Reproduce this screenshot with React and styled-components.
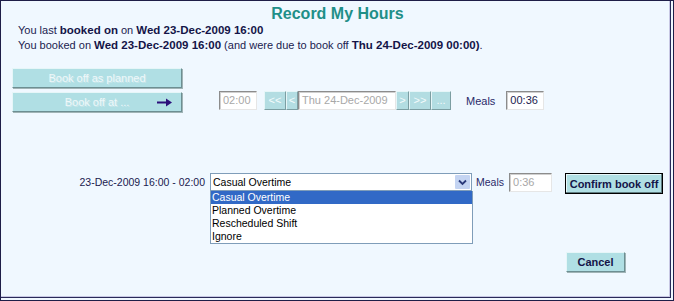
import styled, { createGlobalStyle } from "styled-components";

const GlobalStyle = createGlobalStyle`
  html, body {
    margin: 0;
    padding: 0;
    background: #ffffff;
  }
  body {
    font-family: "Liberation Sans", Arial, sans-serif;
  }
`;

const Frame = styled.div`
  box-sizing: border-box;
  width: 674px;
  height: 301px;
  background: #f0f8ff;
  border: 1px solid #1e1e48;
  box-shadow: inset -2px -2px 0 #f0f8ff, inset -3px -3px 0 #2a2a5a,
    inset -4px -4px 0 #c8c8e4;
  padding: 3px 0 0 11px;
  color: #1b1b4f;
  font-size: 11px;
`;

const Title = styled.h1`
  margin: 0;
  padding-right: 10px;
  text-align: center;
  font-size: 16px;
  font-weight: bold;
  color: #1f8f88;
  line-height: 19px;
`;

const InfoLine = styled.div`
  padding-left: 6px;
  line-height: 15px;
  font-size: 11px;
  white-space: nowrap;

  b {
    font-size: 11.5px;
    color: #141448;
  }
`;

const TopRow = styled.div`
  display: flex;
  align-items: flex-end;
  margin-top: 15px;
`;

const ButtonStack = styled.div`
  display: flex;
  flex-direction: column;
  gap: 4px;
  width: 170px;
  flex: none;
`;

const WideButton = styled.button`
  position: relative;
  box-sizing: border-box;
  height: 20px;
  width: 100%;
  padding: 0;
  background: #b0dfe4;
  border: 1px solid;
  border-color: #e6f6f8 #6d8e92 #6d8e92 #e6f6f8;
  box-shadow: 1px 1px 0 #a0b4b6;
  color: #eef8fa;
  font-family: "Liberation Sans", Arial, sans-serif;
  font-size: 11px;
  text-shadow: 1px 1px 0 #c8e6ea;
  text-align: center;
`;

const ArrowIcon = styled.svg`
  position: absolute;
  right: 9px;
  top: 5px;
`;

const DateControls = styled.div`
  display: flex;
  align-items: center;
  margin-left: 37px;
  margin-bottom: 2px;
`;

const TextBox = styled.div`
  box-sizing: border-box;
  flex: none;
  width: ${(p) => p.$w}px;
  height: 19px;
  background: #ffffff;
  border: 1px solid;
  border-color: #8c8c8c #e6e6e6 #e6e6e6 #8c8c8c;
  box-shadow: inset 1px 1px 0 #d0d0d0;
  color: ${(p) => (p.$active ? "#1b1b4f" : "#a8a8a8")};
  font-size: 11px;
  line-height: 17px;
  padding-left: 3px;
  white-space: nowrap;
`;

const NavButton = styled.div`
  box-sizing: border-box;
  flex: none;
  width: ${(p) => p.$w}px;
  height: 19px;
  background: #b3dde2;
  border: 1px solid;
  border-color: #e6f6f8 #7c9ea2 #7c9ea2 #e6f6f8;
  color: #f4fbfc;
  font-size: 11px;
  line-height: 16px;
  text-align: center;
`;

const Gap = styled.div`
  width: ${(p) => p.$w}px;
  flex: none;
`;

const Label = styled.span`
  color: #2a2a6a;
  font-size: ${(p) => p.$size || 11}px;
  white-space: nowrap;
`;

const ShiftRow = styled.div`
  display: flex;
  align-items: flex-start;
  margin-top: 61px;

  & > * {
    flex: none;
  }
`;

const ShiftLabel = styled.div`
  width: 193px;
  text-align: right;
  line-height: 18px;
  font-size: 10.5px;
  color: #1b1b4f;
  white-space: nowrap;
`;

const SelectWrap = styled.div`
  position: relative;
  margin-left: 5px;
`;

const SelectBox = styled.div`
  box-sizing: border-box;
  display: flex;
  width: 262px;
  height: 18px;
  background: #ffffff;
  border: 1px solid #7f9db9;
  font-size: 10.5px;
  line-height: 16px;
  color: #000000;
`;

const SelectText = styled.div`
  flex: 1;
  padding-left: 2px;
`;

const SelectArrow = styled.div`
  width: 15px;
  margin: 1px;
  display: flex;
  align-items: center;
  justify-content: center;
  background: #c4d4f2;
  border-radius: 1px;
`;

const DropList = styled.ul`
  position: absolute;
  left: 0;
  top: 18px;
  box-sizing: border-box;
  width: 263px;
  margin: 0;
  padding: 0;
  list-style: none;
  background: #ffffff;
  border: 1px solid #7f9db9;
  border-top: none;
  z-index: 2;
`;

const DropItem = styled.li`
  height: 13px;
  line-height: 13px;
  padding-left: 1px;
  font-size: 10.5px;
  color: ${(p) => (p.$selected ? "#ffffff" : "#000000")};
  background: ${(p) => (p.$selected ? "#3169c6" : "transparent")};
  white-space: nowrap;
`;

const MealsGroup = styled.div`
  display: flex;
  align-items: center;
  height: 18px;
  margin-left: 4px;
  gap: 5px;
`;

const ConfirmButton = styled.button`
  box-sizing: border-box;
  height: 21px;
  width: 98px;
  margin-left: 13px;
  padding: 0;
  background: #b0dfe4;
  border: 1px solid #000000;
  box-shadow: inset -1px -1px 0 #5f7c80, inset 1px 1px 0 #e8f7f9;
  color: #141448;
  font-family: "Liberation Sans", Arial, sans-serif;
  font-size: 11px;
  font-weight: bold;
`;

const CancelRow = styled.div`
  display: flex;
  justify-content: flex-end;
  margin-top: 58px;
  padding-right: 48px;
`;

const CancelButton = styled.button`
  box-sizing: border-box;
  height: 20px;
  width: 59px;
  padding: 0;
  background: #b0dfe4;
  border: 1px solid;
  border-color: #e6f6f8 #6d8e92 #6d8e92 #e6f6f8;
  box-shadow: 1px 1px 0 #a0b4b6;
  color: #141448;
  font-family: "Liberation Sans", Arial, sans-serif;
  font-size: 11px;
  font-weight: bold;
`;

const options = [
  "Casual Overtime",
  "Planned Overtime",
  "Rescheduled Shift",
  "Ignore",
];

export default function App() {
  return (
    <>
      <GlobalStyle />
      <Frame>
        <Title>Record My Hours</Title>
        <InfoLine>
          You last <b>booked on</b> on <b>Wed 23-Dec-2009 16:00</b>
        </InfoLine>
        <InfoLine>
          You booked on <b>Wed 23-Dec-2009 16:00</b> (and were due to book off{" "}
          <b>Thu 24-Dec-2009 00:00)</b>.
        </InfoLine>

        <TopRow>
          <ButtonStack>
            <WideButton disabled>Book off as planned</WideButton>
            <WideButton disabled>
              Book off at ...
              <ArrowIcon width="15" height="9" viewBox="0 0 15 9">
                <path d="M0 3.5h9V0.5l6 4-6 4V5.5H0z" fill="#2b0f7a" />
              </ArrowIcon>
            </WideButton>
          </ButtonStack>
          <DateControls>
            <TextBox $w={38}>02:00</TextBox>
            <Gap $w={7} />
            <NavButton $w={22}>&lt;&lt;</NavButton>
            <NavButton $w={12}>&lt;</NavButton>
            <TextBox $w={98}>Thu 24-Dec-2009</TextBox>
            <NavButton $w={13}>&gt;</NavButton>
            <NavButton $w={22}>&gt;&gt;</NavButton>
            <NavButton $w={20}>...</NavButton>
            <Gap $w={15} />
            <Label>Meals</Label>
            <Gap $w={11} />
            <TextBox $w={38} $active>
              00:36
            </TextBox>
          </DateControls>
        </TopRow>

        <ShiftRow>
          <ShiftLabel>23-Dec-2009 16:00 - 02:00</ShiftLabel>
          <SelectWrap>
            <SelectBox>
              <SelectText>Casual Overtime</SelectText>
              <SelectArrow>
                <svg width="9" height="7" viewBox="0 0 9 7">
                  <path
                    d="M1 1.5l3.5 3.5 3.5-3.5"
                    fill="none"
                    stroke="#2a3a7a"
                    strokeWidth="1.8"
                  />
                </svg>
              </SelectArrow>
            </SelectBox>
            <DropList>
              {options.map((o, i) => (
                <DropItem key={o} $selected={i === 0}>
                  {o}
                </DropItem>
              ))}
            </DropList>
          </SelectWrap>
          <MealsGroup>
            <Label $size={10.5}>Meals</Label>
            <TextBox $w={43}>0:36</TextBox>
          </MealsGroup>
          <ConfirmButton>Confirm book off</ConfirmButton>
        </ShiftRow>

        <CancelRow>
          <CancelButton>Cancel</CancelButton>
        </CancelRow>
      </Frame>
    </>
  );
}
